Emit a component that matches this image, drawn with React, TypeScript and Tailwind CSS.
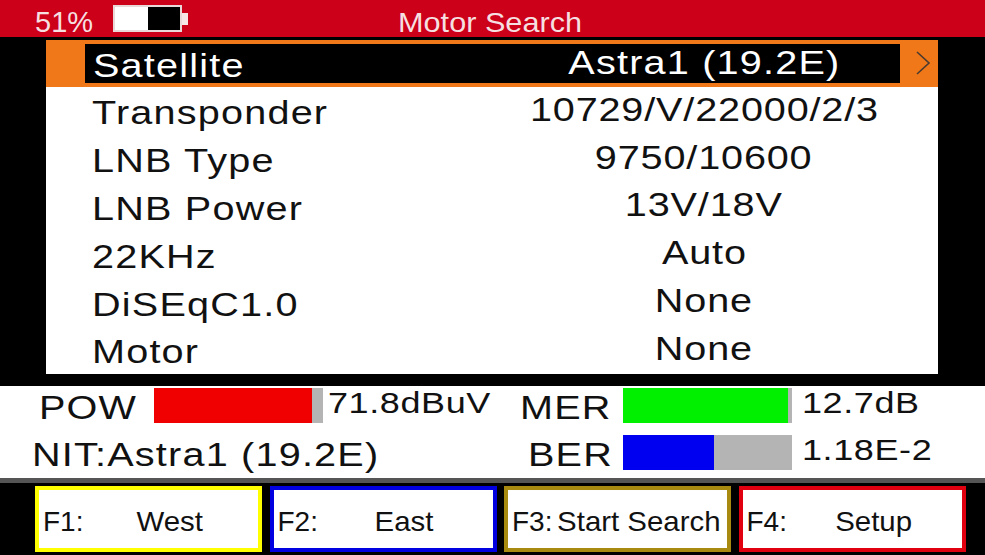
const rows = [
  ["Transponder", "10729/V/22000/2/3"],
  ["LNB Type", "9750/10600"],
  ["LNB Power", "13V/18V"],
  ["22KHz", "Auto"],
  ["DiSEqC1.0", "None"],
  ["Motor", "None"],
];

const keys = [
  { key: "F1:", label: "West", border: "border-[#ffff00]" },
  { key: "F2:", label: "East", border: "border-[#0000e0]" },
  { key: "F3:", label: "Start Search", border: "border-[#a88a10]" },
  { key: "F4:", label: "Setup", border: "border-[#e00010]" },
];

// texto do aparelho é mais largo que a Arial normal
function Wide({ children }: { children: React.ReactNode }) {
  return <span className="inline-block origin-left scale-x-[1.2] whitespace-nowrap tracking-[1px]">{children}</span>;
}

function Value({ children }: { children: React.ReactNode }) {
  return <span className="inline-block scale-x-[1.2] whitespace-nowrap tracking-[0.7px]">{children}</span>;
}

function Reading({ children }: { children: React.ReactNode }) {
  return <span className="inline-block origin-left scale-x-[1.2] whitespace-nowrap text-[30px] tracking-[0.5px]">{children}</span>;
}

function Bar({ fill, color }: { fill: number; color: string }) {
  return (
    <div className="h-[35px] w-[169px] bg-[#b4b4b4]">
      <div className={`h-full ${color}`} style={{ width: fill }} />
    </div>
  );
}

export default function App() {
  return (
    <div className="flex h-[555px] w-[985px] flex-col overflow-hidden bg-black font-['Liberation_Sans',Arial,sans-serif] text-[#111]">
      {/* barra de cima */}
      <header className="grid h-[37px] grid-cols-[398px_184px_1fr] items-center bg-[#cc0018] text-[#f6dfe0]">
        <div className="flex items-center pl-[35px]">
          <span className="w-[78px] pt-[8px] text-[29px] leading-none">51%</span>
          <div className="flex items-center">
            <div className="flex h-[27px] w-[69px] border-[2px] border-[#e8d8d8] bg-black">
              <div className="h-full w-[33px] bg-white" />
            </div>
            <div className="h-[12px] w-[6px] bg-[#f6e6e6]" />
          </div>
        </div>
        <div className="whitespace-nowrap pt-[8px] text-center text-[28px] leading-none">
          <span className="inline-block scale-x-[1.095]">Motor Search</span>
        </div>
      </header>

      {/* menu */}
      <main className="ml-[46px] mt-[3px] h-[334px] w-[892px] bg-white text-[33px] leading-none">
        <div className="flex h-[47px] items-center bg-[#f07818] pl-[39px]">
          <div className="grid h-[39px] w-[815px] grid-cols-[423px_392px] items-center bg-black text-white">
            <div className="pl-[8px] pt-[3px]"><Wide>Satellite</Wide></div>
            <div className="pb-[2px] text-center tracking-[1px]">
              <span className="inline-block scale-x-[1.2] whitespace-nowrap">Astra1 (19.2E)</span>
            </div>
          </div>
          <svg width="38" height="39" viewBox="0 0 38 39" className="shrink-0">
            <path d="M17 8 L29 19 L17 30" fill="none" stroke="#4a3a30" strokeWidth="1.6" />
          </svg>
        </div>
        {rows.map(([name, value]) => (
          <div key={name} className="grid h-[47.8px] grid-cols-[424px_468px] items-center">
            <div className="pl-[46px] pt-[4px]"><Wide>{name}</Wide></div>
            <div className="pb-[3px] text-center"><Value>{value}</Value></div>
          </div>
        ))}
      </main>

      {/* medidores */}
      <section className="mt-[12px] grid h-[92px] grid-cols-[154px_169px_197px_103px_169px_1fr] grid-rows-[35px_35px] items-center gap-y-[12px] bg-white pt-[2px] text-[33px] leading-none">
        <div className="pl-[39px] pt-[3px]"><Wide>POW</Wide></div>
        <Bar fill={158} color="bg-[#f00000]" />
        <div className="pb-[8px] pl-[5px]"><Reading>71.8dBuV</Reading></div>
        <div className="pt-[3px]"><Wide>MER</Wide></div>
        <Bar fill={165} color="bg-[#00f000]" />
        <div className="pb-[8px] pl-[10px]"><Reading>12.7dB</Reading></div>

        <div className="col-span-3 pl-[32px] pt-[3px]"><Wide>NIT:Astra1 (19.2E)</Wide></div>
        <div className="pl-[8px] pt-[3px]"><Wide>BER</Wide></div>
        <Bar fill={91} color="bg-[#0000f0]" />
        <div className="pb-[8px] pl-[10px]"><Reading>1.18E-2</Reading></div>
      </section>

      {/* teclas */}
      <div className="h-[5px] bg-[#555]" />
      <footer className="mt-[3px] flex gap-[7.5px] pl-[35px]">
        {keys.map((k) => (
          <div key={k.key} className={`grid h-[66px] w-[227px] grid-cols-[45px_172px] items-center border-[4px] bg-white pt-[5px] text-[28px] leading-none ${k.border}`}>
            <span className="pl-[4px]">{k.key}</span>
            <span className="whitespace-nowrap text-center">
              <span className="inline-block scale-x-[1.05]">{k.label}</span>
            </span>
          </div>
        ))}
      </footer>
    </div>
  );
}
